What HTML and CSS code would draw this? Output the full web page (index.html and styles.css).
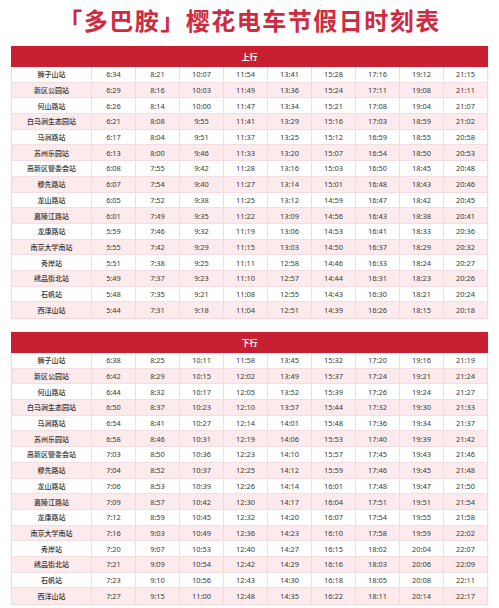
FILE: index.html
```html
<!DOCTYPE html>
<html lang="zh">
<head>
<meta charset="utf-8">
<link rel="stylesheet" href="styles.css">
</head>
<body>
<div class="page">
  <h1 class="title">「多巴胺」樱花电车节假日时刻表</h1>

  <div class="tbl">
    <div class="head">上行</div>
    <div class="row"><span class="st">狮子山站</span><span>6:34</span><span>8:21</span><span>10:07</span><span>11:54</span><span>13:41</span><span>15:28</span><span>17:16</span><span>19:12</span><span>21:15</span></div>
    <div class="row"><span class="st">新区公园站</span><span>6:29</span><span>8:16</span><span>10:03</span><span>11:49</span><span>13:36</span><span>15:24</span><span>17:11</span><span>19:08</span><span>21:11</span></div>
    <div class="row"><span class="st">何山路站</span><span>6:26</span><span>8:14</span><span>10:00</span><span>11:47</span><span>13:34</span><span>15:21</span><span>17:08</span><span>19:04</span><span>21:07</span></div>
    <div class="row"><span class="st">白马涧生态园站</span><span>6:21</span><span>8:08</span><span>9:55</span><span>11:41</span><span>13:29</span><span>15:16</span><span>17:03</span><span>18:59</span><span>21:02</span></div>
    <div class="row"><span class="st">马涧路站</span><span>6:17</span><span>8:04</span><span>9:51</span><span>11:37</span><span>13:25</span><span>15:12</span><span>16:59</span><span>18:55</span><span>20:58</span></div>
    <div class="row"><span class="st">苏州乐园站</span><span>6:13</span><span>8:00</span><span>9:46</span><span>11:33</span><span>13:20</span><span>15:07</span><span>16:54</span><span>18:50</span><span>20:53</span></div>
    <div class="row"><span class="st">高新区管委会站</span><span>6:08</span><span>7:55</span><span>9:42</span><span>11:28</span><span>13:16</span><span>15:03</span><span>16:50</span><span>18:45</span><span>20:48</span></div>
    <div class="row"><span class="st">穆先路站</span><span>6:07</span><span>7:54</span><span>9:40</span><span>11:27</span><span>13:14</span><span>15:01</span><span>16:48</span><span>18:43</span><span>20:46</span></div>
    <div class="row"><span class="st">龙山路站</span><span>6:05</span><span>7:52</span><span>9:38</span><span>11:25</span><span>13:12</span><span>14:59</span><span>16:47</span><span>18:42</span><span>20:45</span></div>
    <div class="row"><span class="st">嘉陵江路站</span><span>6:01</span><span>7:49</span><span>9:35</span><span>11:22</span><span>13:09</span><span>14:56</span><span>16:43</span><span>18:38</span><span>20:41</span></div>
    <div class="row"><span class="st">龙康路站</span><span>5:59</span><span>7:46</span><span>9:32</span><span>11:19</span><span>13:06</span><span>14:53</span><span>16:41</span><span>18:33</span><span>20:36</span></div>
    <div class="row"><span class="st">南京大学南站</span><span>5:55</span><span>7:42</span><span>9:29</span><span>11:15</span><span>13:03</span><span>14:50</span><span>16:37</span><span>18:29</span><span>20:32</span></div>
    <div class="row"><span class="st">秀岸站</span><span>5:51</span><span>7:38</span><span>9:25</span><span>11:11</span><span>12:58</span><span>14:46</span><span>16:33</span><span>18:24</span><span>20:27</span></div>
    <div class="row"><span class="st">绣品街北站</span><span>5:49</span><span>7:37</span><span>9:23</span><span>11:10</span><span>12:57</span><span>14:44</span><span>16:31</span><span>18:23</span><span>20:26</span></div>
    <div class="row"><span class="st">石帆站</span><span>5:48</span><span>7:35</span><span>9:21</span><span>11:08</span><span>12:55</span><span>14:43</span><span>16:30</span><span>18:21</span><span>20:24</span></div>
    <div class="row"><span class="st">西洋山站</span><span>5:44</span><span>7:31</span><span>9:18</span><span>11:04</span><span>12:51</span><span>14:39</span><span>16:26</span><span>18:15</span><span>20:18</span></div>
  </div>

  <div class="tbl">
    <div class="head">下行</div>
    <div class="row"><span class="st">狮子山站</span><span>6:38</span><span>8:25</span><span>10:11</span><span>11:58</span><span>13:45</span><span>15:32</span><span>17:20</span><span>19:16</span><span>21:19</span></div>
    <div class="row"><span class="st">新区公园站</span><span>6:42</span><span>8:29</span><span>10:15</span><span>12:02</span><span>13:49</span><span>15:37</span><span>17:24</span><span>19:21</span><span>21:24</span></div>
    <div class="row"><span class="st">何山路站</span><span>6:44</span><span>8:32</span><span>10:17</span><span>12:05</span><span>13:52</span><span>15:39</span><span>17:26</span><span>19:24</span><span>21:27</span></div>
    <div class="row"><span class="st">白马涧生态园站</span><span>6:50</span><span>8:37</span><span>10:23</span><span>12:10</span><span>13:57</span><span>15:44</span><span>17:32</span><span>19:30</span><span>21:33</span></div>
    <div class="row"><span class="st">马涧路站</span><span>6:54</span><span>8:41</span><span>10:27</span><span>12:14</span><span>14:01</span><span>15:48</span><span>17:36</span><span>19:34</span><span>21:37</span></div>
    <div class="row"><span class="st">苏州乐园站</span><span>6:58</span><span>8:46</span><span>10:31</span><span>12:19</span><span>14:06</span><span>15:53</span><span>17:40</span><span>19:39</span><span>21:42</span></div>
    <div class="row"><span class="st">高新区管委会站</span><span>7:03</span><span>8:50</span><span>10:36</span><span>12:23</span><span>14:10</span><span>15:57</span><span>17:45</span><span>19:43</span><span>21:46</span></div>
    <div class="row"><span class="st">穆先路站</span><span>7:04</span><span>8:52</span><span>10:37</span><span>12:25</span><span>14:12</span><span>15:59</span><span>17:46</span><span>19:45</span><span>21:48</span></div>
    <div class="row"><span class="st">龙山路站</span><span>7:06</span><span>8:53</span><span>10:39</span><span>12:26</span><span>14:14</span><span>16:01</span><span>17:48</span><span>19:47</span><span>21:50</span></div>
    <div class="row"><span class="st">嘉陵江路站</span><span>7:09</span><span>8:57</span><span>10:42</span><span>12:30</span><span>14:17</span><span>16:04</span><span>17:51</span><span>19:51</span><span>21:54</span></div>
    <div class="row"><span class="st">龙康路站</span><span>7:12</span><span>8:59</span><span>10:45</span><span>12:32</span><span>14:20</span><span>16:07</span><span>17:54</span><span>19:55</span><span>21:58</span></div>
    <div class="row"><span class="st">南京大学南站</span><span>7:16</span><span>9:03</span><span>10:49</span><span>12:36</span><span>14:23</span><span>16:10</span><span>17:58</span><span>19:59</span><span>22:02</span></div>
    <div class="row"><span class="st">秀岸站</span><span>7:20</span><span>9:07</span><span>10:53</span><span>12:40</span><span>14:27</span><span>16:15</span><span>18:02</span><span>20:04</span><span>22:07</span></div>
    <div class="row"><span class="st">绣品街北站</span><span>7:21</span><span>9:09</span><span>10:54</span><span>12:42</span><span>14:29</span><span>16:16</span><span>18:03</span><span>20:06</span><span>22:09</span></div>
    <div class="row"><span class="st">石帆站</span><span>7:23</span><span>9:10</span><span>10:56</span><span>12:43</span><span>14:30</span><span>16:18</span><span>18:05</span><span>20:08</span><span>22:11</span></div>
    <div class="row"><span class="st">西洋山站</span><span>7:27</span><span>9:15</span><span>11:00</span><span>12:48</span><span>14:35</span><span>16:22</span><span>18:11</span><span>20:14</span><span>22:17</span></div>
  </div>
</div>
</body>
</html>
```
FILE: styles.css
```css
html, body {
  margin: 0;
  padding: 0;
  background: #ffffff;
}
.page {
  padding: 0 11px;
  font-family: "Noto Sans", "Noto Sans CJK SC", sans-serif;
}
.title {
  margin: 0 0 6px 0;
  height: 40px;
  line-height: 40px;
  text-align: center;
  font-family: "Noto Sans CJK SC", sans-serif;
  font-weight: 700;
  font-size: 24px;
  letter-spacing: 1.5px;
  color: #d02a3f;
}
.tbl {
  border: 1px solid #efdadc;
  border-top: none;
  box-shadow: 0 0 2px rgba(0, 0, 0, 0.08);
  margin-bottom: 13px;
}
.head {
  height: 21px;
  margin: 0 -1px;
  background: #c81f31;
  color: #ffffff;
  font-family: "Noto Sans CJK SC", sans-serif;
  font-weight: 700;
  font-size: 8px;
  line-height: 21px;
  text-align: center;
}
.row {
  display: grid;
  grid-template-columns: 79px repeat(9, 1fr);
  height: 15.7px;
  box-sizing: border-box;
  border-bottom: 1px solid #f3dfe1;
  background: #ffffff;
}
.row:nth-child(odd) {
  background: #fceaec;
}
.row:last-child {
  border-bottom: none;
}
.row span {
  display: flex;
  align-items: center;
  justify-content: center;
  border-left: 1px solid #f1dde0;
  font-size: 7.4px;
  color: #3a3a3a;
}
.row span.st {
  border-left: none;
  font-family: "Noto Sans CJK SC", sans-serif;
  font-weight: 500;
  font-size: 7px;
  color: #333333;
}
```
